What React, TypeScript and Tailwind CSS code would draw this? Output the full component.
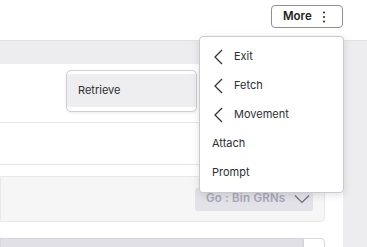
const menuItems = [
  { label: 'Exit', sub: true },
  { label: 'Fetch', sub: true },
  { label: 'Movement', sub: true },
  { label: 'Attach', sub: false },
  { label: 'Prompt', sub: false },
]

function ChevronLeft() {
  return (
    <svg width="9" height="16" viewBox="0 0 9 16" className="mr-[11px]">
      <polyline points="8,1 1,8 8,15" fill="none" stroke="#333" strokeWidth="1.3" />
    </svg>
  )
}

export default function App() {
  return (
    <div
      className="relative w-[367px] h-[247px] overflow-hidden bg-[#ededf0] text-[#2e2e33]"
      style={{ fontFamily: 'Inter, "Noto Sans", sans-serif' }}
    >
      {/* header */}
      <div className="h-[40px] bg-white flex justify-end items-start pt-[5px] pr-[24px]">
        <button className="w-[72px] h-[23px] rounded-[4px] border border-[#8e8e98] flex items-center pl-[11px] gap-[10px] text-[11.5px] font-semibold text-[#222]">
          <span>More</span>
          <svg width="4" height="12" viewBox="0 0 4 12">
            <circle cx="2" cy="1.5" r="1.1" fill="#333" />
            <circle cx="2" cy="6" r="1.1" fill="#333" />
            <circle cx="2" cy="10.5" r="1.1" fill="#333" />
          </svg>
        </button>
      </div>

      {/* gray band */}
      <div className="h-[24px] border-t border-[#e2e2e6]" />

      {/* main panel */}
      <div className="w-[343px] h-[183px] bg-white">
        <div className="h-[59px] border-b border-[#e6e6ea]" />
        <div className="h-[42px] border-b border-[#e6e6ea]" />
        <div className="pt-[11px] pr-[18px]">
          <div className="h-[46px] bg-[#f6f6f7] border border-[#e8e8ec] rounded-r-[4px] flex items-center justify-end pr-[11px]">
            <div className="w-[118px] h-[23px] bg-[#e2e2e8] rounded-[3px] flex items-center justify-between pl-[11px] pr-[3px]">
              <span className="text-[11.5px] font-semibold tracking-[0.2px] text-[#a8a8b8]">Go : Bin GRNs</span>
              <svg width="16" height="10" viewBox="0 0 16 10">
                <polyline points="1,1.5 8,8.5 15,1.5" fill="none" stroke="#6d6d7e" strokeWidth="1.2" />
              </svg>
            </div>
          </div>
        </div>
        <div className="mt-[16px] pr-[18px] flex">
          <div className="flex-1 h-[20px] bg-[#e0e0e6] border border-[#d6d6de]" />
          <div className="w-[22px] h-[20px] bg-white border border-[#d6d6de] rounded-tr-[4px]" />
        </div>
      </div>

      {/* submenu popup */}
      <div className="absolute left-[66px] top-[70px] w-[131px] h-[42px] bg-white border border-[#cfcfd6] rounded-[5px] pt-[3px] shadow-[0_1px_3px_rgba(0,0,0,0.08)]">
        <div className="h-[33px] bg-[#eeeef1] flex items-center pl-[11px] text-[11px]">Retrieve</div>
      </div>

      {/* dropdown menu */}
      <div className="absolute left-[199px] top-[36px] w-[145px] h-[157px] bg-white border border-[#c9c9d0] rounded-[4px] shadow-[0_2px_8px_rgba(0,0,0,0.12)] pt-[5px]">
        {menuItems.map((item) => (
          <div
            key={item.label}
            className={`h-[29px] flex items-center text-[11px] ${item.sub ? 'pl-[14px]' : 'pl-[12px]'}`}
          >
            {item.sub && <ChevronLeft />}
            <span>{item.label}</span>
          </div>
        ))}
      </div>
    </div>
  )
}
